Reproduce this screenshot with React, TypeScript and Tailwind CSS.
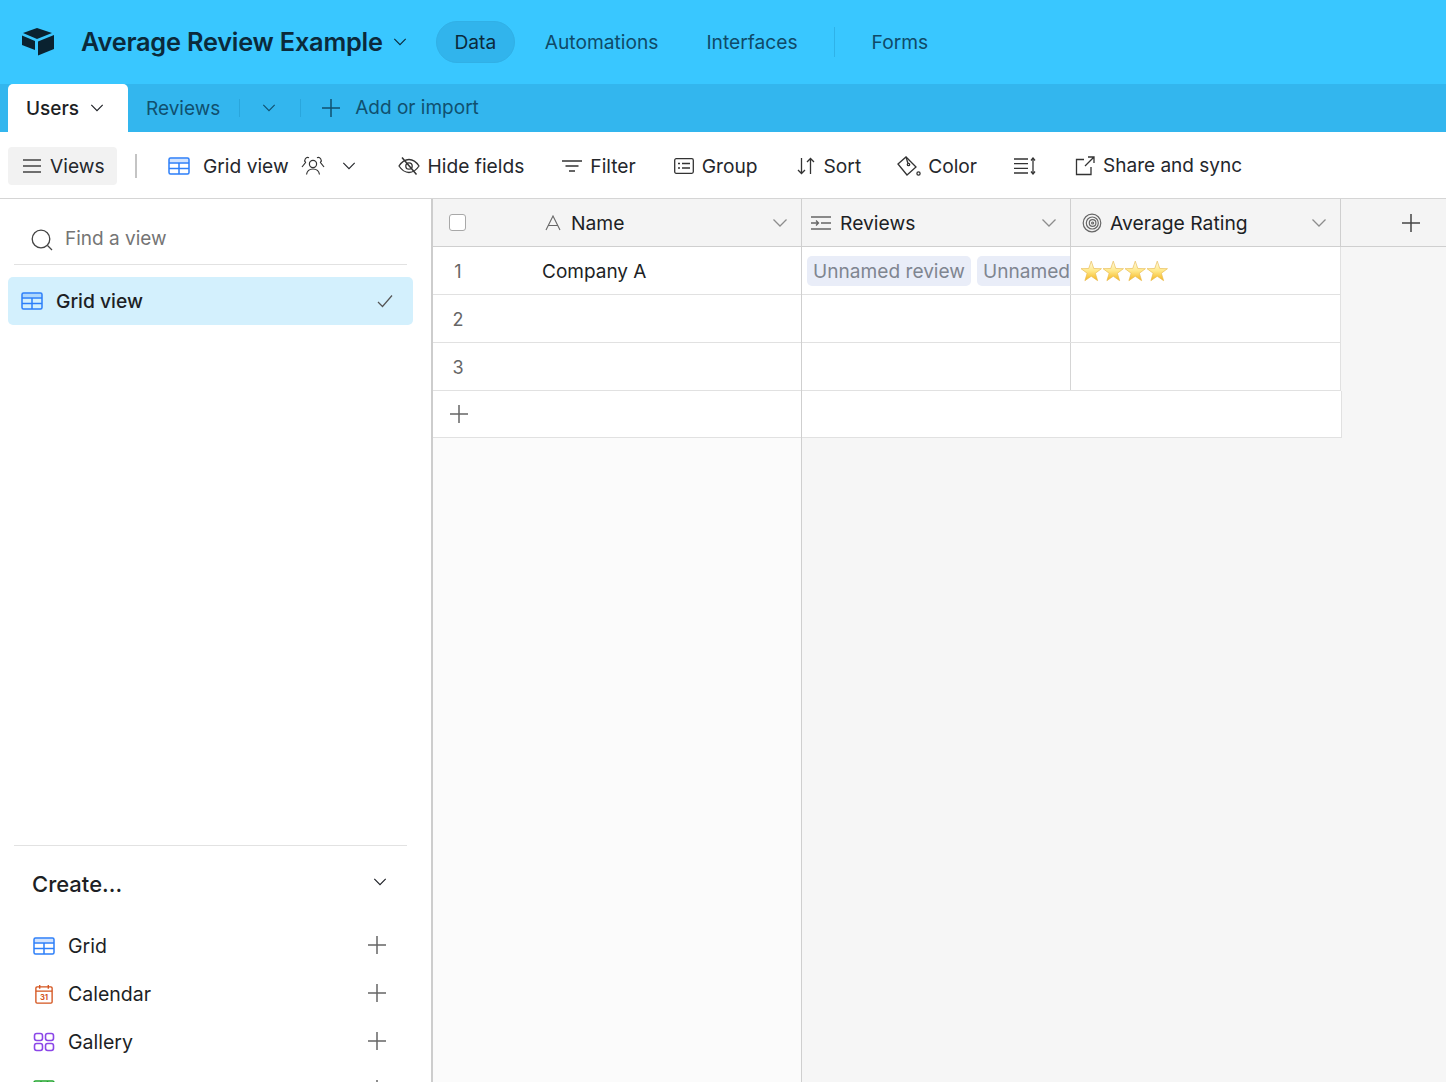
import React from 'react';

const Chevron = ({ className = '' }: { className?: string }) => (
  <svg viewBox="0 0 16 16" fill="none" stroke="currentColor" strokeWidth="1.3" className={className}>
    <path d="M1.5 4.5 8 11l6.5-6.5" />
  </svg>
);

const Plus = ({ className = '' }: { className?: string }) => (
  <svg viewBox="0 0 18 18" fill="none" stroke="currentColor" strokeWidth="1.5" className={className}>
    <path d="M9 0v18M0 9h18" />
  </svg>
);

const GridIcon = ({ className = '' }: { className?: string }) => (
  <svg viewBox="0 0 22 18" fill="none" stroke="#2d7ff9" strokeWidth="1.5" className={className}>
    <path d="M1 3.5h20" strokeWidth="4" strokeOpacity="0.22" />
    <rect x="1" y="1" width="20" height="16" rx="1.5" />
    <path d="M1 6h20M1 11.5h20M11 6v11" />
  </svg>
);

const Star = ({ id }: { id: string }) => (
  <svg viewBox="0 0 24 23" className="-mr-[0.5px] h-[22px] w-[22.5px] shrink-0">
    <defs>
      <linearGradient id={id} x1="0" y1="0" x2="0" y2="1">
        <stop offset="0" stopColor="#fffce8" />
        <stop offset="0.5" stopColor="#ffe888" />
        <stop offset="1" stopColor="#f5b520" />
      </linearGradient>
    </defs>
    <path
      d="M12 1l2.7 7.800 8.200.2-6.500 4.900 2.400 7.900-6.800-4.700-6.800 4.700 2.400-7.900L1.100 9l8.200-.2z"
      fill={`url(#${id})`}
      stroke="#e8bb50"
      strokeWidth="0.7"
      strokeLinejoin="round"
    />
  </svg>
);

const ColumnHeader = ({ icon, label, width }: { icon: React.ReactNode; label: string; width: string }) => (
  <div className={`flex h-full items-center border-r border-[#cfcfcf] pl-[11px] pr-[13px] ${width}`}>
    {icon}
    <span className="ml-2 pt-[1px] text-[19.3px] text-[#1d1f25]">{label}</span>
    <Chevron className="ml-auto h-4 w-4 text-[#8d8d8d]" />
  </div>
);

const createItems = [
  {
    key: 'grid',
    label: 'Grid',
    icon: <GridIcon className="h-[18px] w-[22px]" />,
  },
  {
    key: 'calendar',
    label: 'Calendar',
    icon: (
      <svg viewBox="0 0 22 22" fill="none" stroke="#d4541e" strokeWidth="1.4" className="h-[21px] w-[22px]">
        <rect x="2.5" y="3" width="17" height="17" rx="1.2" />
        <path d="M2.5 7.5h17M6.5 1v4M15.5 1v4" />
        <text x="11" y="17" textAnchor="middle" fontSize="8" fontWeight="700" fill="#d4541e" stroke="none" fontFamily="Inter, sans-serif">
          31
        </text>
      </svg>
    ),
  },
  {
    key: 'gallery',
    label: 'Gallery',
    icon: (
      <svg viewBox="0 0 22 20" fill="none" stroke="#8b46e8" strokeWidth="1.6" className="h-5 w-[22px]">
        <rect x="1.5" y="1.5" width="8" height="7" rx="2.2" />
        <rect x="12.5" y="1.5" width="8" height="7" rx="2.2" />
        <rect x="1.5" y="11.5" width="8" height="7" rx="2.2" />
        <rect x="12.5" y="11.5" width="8" height="7" rx="2.2" />
      </svg>
    ),
  },
  {
    key: 'kanban',
    label: '',
    icon: (
      <svg viewBox="0 0 22 18" fill="none" stroke="#20a52d" strokeWidth="1.5" className="-mt-[3px] h-[18px] w-[22px]">
        <rect x="1" y="1" width="20" height="16" rx="1.5" />
        <path d="M1 4h20" strokeWidth="4" />
        <path d="M8 1v16M14.5 1v16" />
      </svg>
    ),
  },
];

export default function App() {
  return (
    <div className="flex h-[1082px] w-[1446px] flex-col overflow-hidden bg-white font-['Inter',sans-serif] text-[#1d1f25]">
      {/* App bar */}
      <header className="flex h-[84px] shrink-0 items-center bg-[#39c7ff] text-[19.2px] text-[#0b2a3b]">
        <svg viewBox="0 0 34 28" className="ml-[21px] h-[28px] w-[34px]" fill="#0a2230">
          <path d="M16 0 31 5 16 11 2 5z" />
          <path d="M1 7.5 14 13v9L1 17z" />
          <path d="M33 7v14l-16 6.500V13.500z" />
        </svg>
        <h1 className="ml-[26px] text-[25.3px] font-semibold tracking-[-0.2px] whitespace-nowrap">Average Review Example</h1>
        <Chevron className="ml-[10px] h-[14px] w-[14px]" />
        <div className="ml-[29px] flex h-[42px] w-[79px] items-center justify-center rounded-full border border-[#31b0e6] bg-[#31b4ec]">
          Data
        </div>
        <span className="ml-[30px] text-[#0f4a68]">Automations</span>
        <span className="ml-[48px] text-[#0f4a68]">Interfaces</span>
        <div className="ml-[36px] h-[30px] w-px bg-[#2fb2e8]" />
        <span className="ml-[37px] text-[#0f4a68]">Forms</span>
      </header>

      {/* Table tabs */}
      <nav className="flex h-[48px] shrink-0 items-center bg-[#33b6ee] text-[19px] text-[#10506f]">
        <div className="ml-2 flex h-full w-[120px] items-center rounded-t-[5px] bg-white pl-[18px] text-[#1d1f25]">
          <span className="pt-[2px] font-medium">Users</span>
          <Chevron className="ml-[11px] h-[14px] w-[14px]" />
        </div>
        <span className="ml-[18px] pt-[3px]">Reviews</span>
        <div className="ml-[19px] h-[18px] w-px bg-[#2aa6dc]" />
        <Chevron className="ml-[22px] h-[14px] w-[14px]" />
        <div className="ml-[24px] h-[18px] w-px bg-[#2aa6dc]" />
        <Plus className="ml-[21px] h-[18px] w-[18px]" />
        <span className="ml-[15px] pt-[1px]">Add or import</span>
      </nav>

      {/* View toolbar */}
      <div className="flex h-[67px] shrink-0 items-center border-b border-[#d5d5d5] pt-[2px] text-[19.2px] text-[#25272c]">
        <div className="ml-2 flex h-[38px] w-[109px] items-center rounded-[4px] bg-[#f2f2f2] pl-[15px]">
          <svg viewBox="0 0 18 14" fill="none" stroke="#444" strokeWidth="1.5" className="h-[14px] w-[18px]">
            <path d="M0 1h18M0 7h18M0 13h18" />
          </svg>
          <span className="ml-[9px]">Views</span>
        </div>
        <div className="ml-[18px] h-6 w-[2px] bg-[#c4c4c4]" />
        <GridIcon className="ml-[31px] h-[18px] w-[22px]" />
        <span className="ml-[13px]">Grid view</span>
        <svg viewBox="0 0 24 20" fill="none" stroke="#333" strokeWidth="1.2" className="ml-[12px] h-5 w-[24px]">
          <circle cx="12" cy="8" r="3.6" />
          <path d="M5.5 18.500c.6-3.800 3-5.500 6.500-5.500s5.900 1.700 6.500 5.500" />
          <path d="M8 1.800a3 3 0 0 0-3.500 4.700L1 11M16 1.800a3 3 0 0 1 3.500 4.700l3.500 4.500" />
        </svg>
        <Chevron className="ml-[17px] h-[14px] w-[14px]" />
        <svg viewBox="0 0 22 20" fill="none" stroke="#333" strokeWidth="1.3" className="ml-[42px] h-5 w-[22px]">
          <path d="M1 10c3-4.500 6.200-6.500 10-6.500S18 5.500 21 10c-3 4.500-6.200 6.500-10 6.500S4 14.500 1 10z" />
          <circle cx="11" cy="10" r="3.2" />
          <path d="M4 1.500 18.500 18.500" strokeWidth="1.5" />
        </svg>
        <span className="ml-2">Hide fields</span>
        <svg viewBox="0 0 20 12" fill="none" stroke="#333" strokeWidth="1.4" className="ml-[38px] h-3 w-5">
          <path d="M0 1h20M3.500 6h13M7 11h6" />
        </svg>
        <span className="ml-2">Filter</span>
        <svg viewBox="0 0 20 16" fill="none" stroke="#333" strokeWidth="1.3" className="ml-[38px] h-4 w-5">
          <rect x=".7" y=".7" width="18.600" height="14.600" rx="1.5" />
          <path d="M4 5.500h2M8 5.500h8M4 10h2M8 10h8" />
        </svg>
        <span className="ml-2">Group</span>
        <svg viewBox="0 0 18 18" fill="none" stroke="#333" strokeWidth="1.3" className="ml-[39px] h-[18px] w-[18px]">
          <path d="M4.500 1v15.500M1 13l3.500 3.500L8 13M13.500 17V1.500M10 5l3.500-3.500L17 5" />
        </svg>
        <span className="ml-[9px]">Sort</span>
        <svg viewBox="0 0 24 22" fill="none" stroke="#333" strokeWidth="1.3" className="ml-[36px] h-[22px] w-6">
          <path d="M1 9 9 2l10 10-9 8z" />
          <path d="M9 2l2 6.500" />
          <circle cx="11.500" cy="9.500" r="1.2" />
          <circle cx="21.500" cy="18.500" r="1.6" />
        </svg>
        <span className="ml-[7px]">Color</span>
        <svg viewBox="0 0 22 18" fill="none" stroke="#333" strokeWidth="1.3" className="ml-[37px] h-[18px] w-[22px]">
          <path d="M0 2h14M0 6.700h14M0 11.300h14M0 16h14M19 1.500v15" />
          <path d="M17 3.500l2-2.500 2 2.500M17 14.500l2 2.500 2-2.500" />
        </svg>
        <svg viewBox="0 0 20 20" fill="none" stroke="#333" strokeWidth="1.3" className="ml-[39px] h-5 w-5">
          <path d="M9 3.500H1.500v15H16V11M10 10l9-9M13 1h6v6" />
        </svg>
        <span className="ml-2 text-[19px]">Share and sync</span>
      </div>

      <div className="flex min-h-0 flex-1">
        {/* Views sidebar */}
        <aside className="w-[433px] shrink-0 border-r-2 border-[#cdcdcd] bg-white">
          <div className="ml-[14px] mr-[24px] flex h-[66px] items-center border-b border-[#e2e2e2] pl-[17px] pt-[16px]">
            <svg viewBox="0 0 22 22" fill="none" stroke="#444" strokeWidth="1.3" className="h-[22px] w-[22px]">
              <circle cx="10" cy="10" r="8.8" />
              <path d="m16.500 16.500 4.500 4.500" />
            </svg>
            <span className="ml-[12px] text-[19px] text-[#757575]">Find a view</span>
          </div>
          <div className="ml-2 mr-[18px] mt-[12px] flex h-[48px] items-center rounded-[5px] bg-[#d3f0fd] pl-[13px] pr-[20px]">
            <GridIcon className="h-[18px] w-[22px]" />
            <span className="ml-[13px] text-[19.3px] font-medium">Grid view</span>
            <svg viewBox="0 0 16 14" fill="none" stroke="#555" strokeWidth="1.2" className="ml-auto h-[14px] w-4">
              <path d="m1 8 4.500 4.500L15 1.500" />
            </svg>
          </div>
          <div className="ml-[14px] mr-[24px] mt-[520px] border-t border-[#e2e2e2]">
            <div className="flex items-center justify-between pl-[18px] pr-[20px] pt-[25px]">
              <span className="text-[22px] font-medium leading-[27px] text-[#1d1f25]">Create...</span>
              <Chevron className="-mt-[6px] h-[14px] w-[14px]" />
            </div>
            <div className="mt-[24px] flex flex-col pl-[19px] pr-[21px]">
              {createItems.map((item) => (
                <div key={item.key} className="flex h-[48px] items-center">
                  <div className="flex w-[22px] justify-center">{item.icon}</div>
                  {item.label && <span className="ml-[13px] pt-[2px] text-[19.5px]">{item.label}</span>}
                  <Plus className="-mt-[2px] ml-auto h-[18px] w-[18px] text-[#666]" />
                </div>
              ))}
            </div>
          </div>
        </aside>

        {/* Grid */}
        <main className="flex min-w-0 flex-1 bg-[#f6f6f6]">
          <section className="flex h-full w-[369px] shrink-0 flex-col border-r border-[#cfcfcf] bg-[#fbfbfb]">
            <div className="flex h-[48px] shrink-0 items-center border-b border-[#cfcfcf] bg-[#f4f4f4] pr-[13px]">
              <div className="ml-[16px] h-[17px] w-[17px] rounded-[3px] border border-[#a8a8a8] bg-white" />
              <svg viewBox="0 0 16 16" fill="none" stroke="#666" strokeWidth="1.1" className="ml-[79px] h-4 w-4">
                <path d="M1 15 8 1l7 14M3.500 10.500h9" />
              </svg>
              <span className="ml-[10px] pt-[1px] text-[19.3px]">Name</span>
              <Chevron className="ml-auto h-4 w-4 text-[#8d8d8d]" />
            </div>
            {['1', '2', '3'].map((n) => (
              <div key={n} className="flex h-[48px] shrink-0 items-center border-b border-[#e1e1e1] bg-white pt-[1px]">
                <span className="w-[50px] text-center text-[18px] text-[#666]">{n}</span>
                {n === '1' && <span className="ml-[59px] pt-[2px] text-[19px] text-[#1d1f25]">Company A</span>}
              </div>
            ))}
            <div className="flex h-[47px] shrink-0 items-center border-b border-[#e1e1e1] bg-white pl-[17px]">
              <Plus className="h-[18px] w-[18px] text-[#666]" />
            </div>
          </section>

          <section className="flex w-[644px] shrink-0 flex-col self-start">
            <div className="flex h-[48px] items-center border-b border-[#cfcfcf] bg-[#f4f4f4]">
              <ColumnHeader
                width="w-[269px]"
                label="Reviews"
                icon={
                  <svg viewBox="0 0 20 14" fill="none" stroke="#666" strokeWidth="1.3" className="-ml-[2px] mr-[1px] h-[14px] w-5">
                    <path d="M0 1h20M10 7h10M0 13h20M0 7h7M5 4.500 7.500 7 5 9.500" />
                  </svg>
                }
              />
              <ColumnHeader
                width="w-[270px]"
                label="Average Rating"
                icon={
                  <svg viewBox="0 0 20 20" fill="none" stroke="#666" strokeWidth="1.2" className="h-5 w-5">
                    <circle cx="10" cy="10" r="8.8" />
                    <circle cx="10.300" cy="10" r="6" />
                    <circle cx="10.600" cy="10" r="3.3" />
                    <circle cx="10.600" cy="10" r="1" />
                  </svg>
                }
              />
              <div className="flex flex-1 justify-center pl-[34px]">
                <Plus className="h-[18px] w-[18px] text-[#444]" />
              </div>
            </div>

            <div className="flex h-[48px] w-[539px] border-b border-r border-[#e1e1e1] bg-white">
              <div className="flex w-[269px] items-center gap-[6px] overflow-hidden border-r border-[#d5d5d5] pl-[5px]">
                <span className="flex h-[30px] w-[164px] shrink-0 items-center justify-center rounded-[5px] bg-[#e9edf8] pt-[1px] text-[19.1px] text-[#7f8590]">
                  Unnamed review
                </span>
                <span className="flex h-[30px] flex-1 items-center rounded-l-[5px] bg-[#e9edf8] pl-[6px] pt-[1px] text-[19.1px] text-[#7f8590]">
                  Unnamed
                </span>
              </div>
              <div className="flex items-center pl-[9px]">
                <Star id="star-a" />
                <Star id="star-b" />
                <Star id="star-c" />
                <Star id="star-d" />
              </div>
            </div>
            {[2, 3].map((n) => (
              <div key={n} className="flex h-[48px] w-[539px] border-b border-r border-[#e1e1e1] bg-white">
                <div className="w-[269px] border-r border-[#d5d5d5]" />
              </div>
            ))}
            <div className="h-[47px] w-[540px] border-b border-r border-[#e1e1e1] bg-white" />
          </section>
        </main>
      </div>
    </div>
  );
}
